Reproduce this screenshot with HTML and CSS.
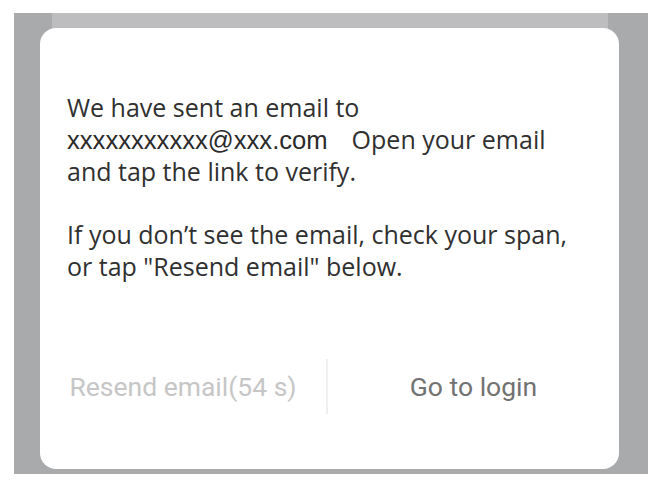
FILE: index.html
```html
<!DOCTYPE html>
<html lang="en">
<head>
<meta charset="utf-8">
<title>Verify email</title>
<link rel="stylesheet" href="styles.css">
</head>
<body>
<div class="backdrop">
  <div class="behind"></div>
  <div class="dialog">
    <div class="message">
      <p class="para">We have sent an email to<br><span class="addr">xxxxxxxxxxx@xxx.com</span><span class="gap"></span>Open your email<br>and tap the link to verify.</p>
      <p class="para">If you don’t see the email, check your span,<br>or tap "Resend email" below.</p>
    </div>
    <div class="actions">
      <button class="btn btn-disabled">Resend email(54 s)</button>
      <div class="divider"></div>
      <button class="btn btn-primary">Go to login</button>
    </div>
  </div>
</div>
</body>
</html>
```
FILE: styles.css
```css
html, body {
  margin: 0;
  padding: 0;
  background: #ffffff;
}
body {
  width: 656px;
  height: 483px;
  overflow: hidden;
}
.backdrop {
  position: relative;
  margin: 13px 8px 0 14px;
  width: 634px;
  height: 461px;
  box-sizing: border-box;
  padding: 15px 29px 0 26px;
  background: #a9aaac;
}
.behind {
  position: absolute;
  left: 38px;
  top: 0;
  width: 556px;
  height: 40px;
  background: #bdbdbf;
  border-radius: 0 0 14px 14px;
}
.dialog {
  position: relative;
  height: 441px;
  box-sizing: border-box;
  background: #ffffff;
  border-radius: 16px;
  padding: 64px 0 0 0;
  display: flex;
  flex-direction: column;
}
.message {
  padding: 0 10px 0 27px;
  font-family: "Open Sans", "Noto Sans", sans-serif;
  font-size: 25px;
  line-height: 31.5px;
  color: #303030;
  white-space: nowrap;
}
.para {
  margin: 0 0 31.5px 0;
}
.addr {
  font-family: "Liberation Sans", Arial, sans-serif;
  font-size: 25.6px;
  color: #2a2a2a;
}
.gap {
  display: inline-block;
  width: 24px;
}
.actions {
  margin-top: 45px;
  display: flex;
  height: 55px;
  align-items: stretch;
}
.btn {
  border: none;
  background: transparent;
  font-family: Roboto, "Liberation Sans", sans-serif;
  font-size: 26.5px;
  padding: 0;
  margin: 0;
  cursor: pointer;
}
.btn-disabled {
  flex: 0 0 286px;
  color: #c6c6c6;
}
.btn-primary {
  flex: 1;
  color: #727272;
}
.divider {
  width: 2px;
  background: #efefef;
}
```
